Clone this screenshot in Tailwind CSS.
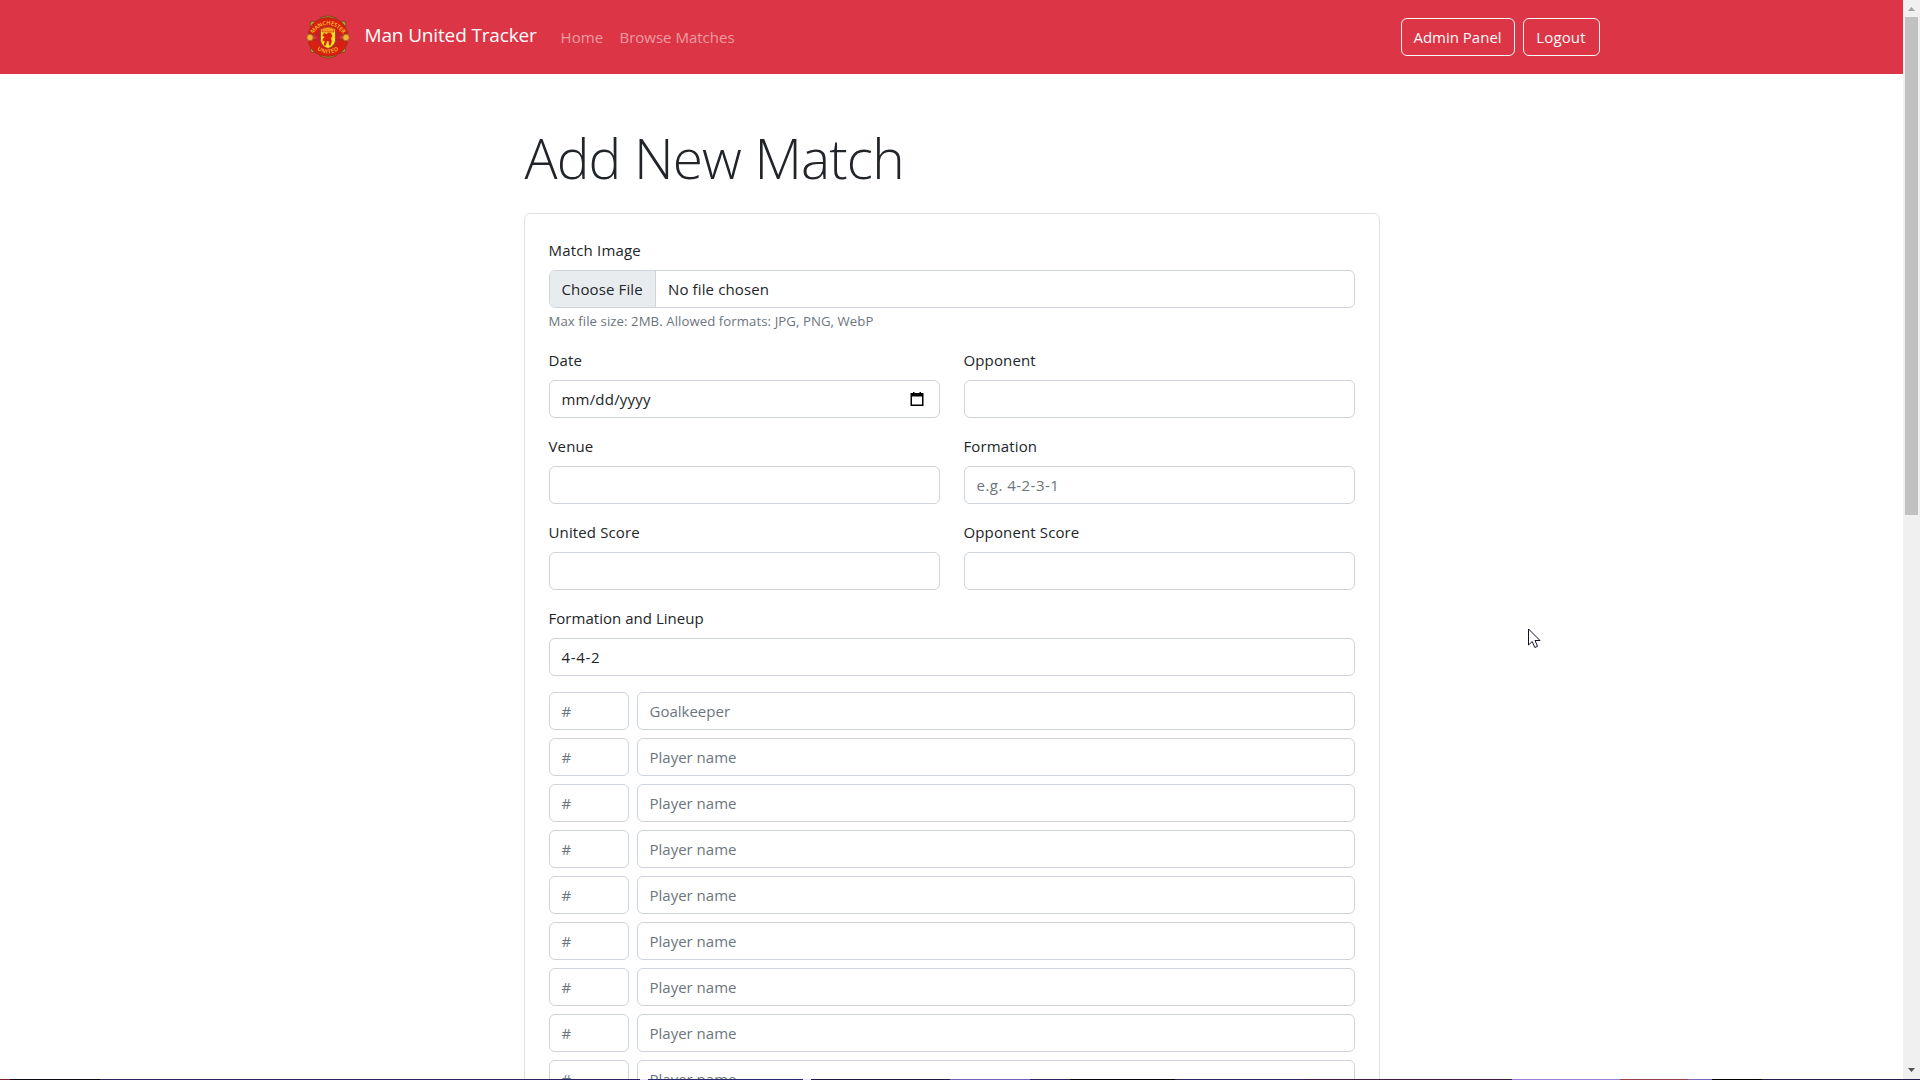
<!DOCTYPE html>
<html lang="en">
<head>
<meta charset="utf-8">
<title>Man United Tracker</title>
<script src="https://cdn.jsdelivr.net/npm/@tailwindcss/browser@4"></script>
</head>
<body class="h-[1080px] overflow-hidden bg-white font-['Open_Sans','Noto_Sans',sans-serif] text-[15px] leading-6 tracking-[0.13px] text-[#212529]">
<div class="flex h-[1079px] overflow-hidden">
  <div class="min-w-0 flex-1">
    <nav class="flex h-[74px] justify-center bg-[#dc3545]">
      <div class="flex w-[1296px] items-center">
        <svg class="ml-[2.500px] h-[44px] w-[44px] shrink-0" viewBox="0 0 44 44">
          <defs>
            <path id="top" d="M6 20Q22 -.5 38 20"/>
            <path id="bottom" d="M6 29.500Q22 48 38 29.500"/>
          </defs>
          <g fill="#b99a2f" stroke="#74401f" stroke-width=".8">
            <circle cx="7" cy="9" r="3"/><circle cx="37" cy="9" r="3"/>
            <circle cx="7" cy="35" r="2.6"/><circle cx="37" cy="35" r="2.6"/>
            <path d="M14 3q8-4 16 0v3H14zM14 41q8 4 16 0v-3H14z"/>
          </g>
          <path d="M2 18Q7 2.500 22 2.500T42 18L34 21Q31 11.500 22 11.500T10 21ZM2 27Q7 41.500 22 41.500T42 27L34 24Q31 33.500 22 33.500T10 24Z" fill="#da1e10" stroke="#8a3a1c" stroke-width=".8"/>
          <circle cx="22" cy="22.500" r="11.800" fill="#c8202c"/>
          <path d="M14.500 14q7.500-4 15 0v11.500q-1 6-7.500 8-6.500-2-7.500-8z" fill="#fbe122" stroke="#9b3a14" stroke-width=".8"/>
          <path d="M16 13.500q6-3 12 0v3.500H16z" fill="#f19a1f" stroke="#da1e10" stroke-width=".6"/>
          <path d="M18 18l2.500 1 2-1.500 2.500 .5 1.500 3-1.500 2 .8 3.500-1.300 4h-1.500l-.3-4-1.500-.5-1.500 4.500h-2l1-5-2 1v-2.500l2-2-2.500-1z" fill="#da1e10"/>
          <circle cx="4" cy="22.500" r="3.200" fill="#f6b33c" stroke="#a5651c" stroke-width=".8"/>
          <circle cx="40" cy="22.500" r="3.200" fill="#f6b33c" stroke="#a5651c" stroke-width=".8"/>
          <g fill="#fbc92a" font-family="Open Sans" font-weight="600" font-size="5.600" text-anchor="middle">
            <text letter-spacing="-.05"><textPath href="#top" startOffset="50%">MANCHESTER</textPath></text>
            <text letter-spacing=".6"><textPath href="#bottom" startOffset="50%">UNITED</textPath></text>
          </g>
        </svg>
        <a class="-mt-1 ml-[14.500px] w-[196px] whitespace-nowrap text-[19px] leading-[30px] tracking-[-0.15px] text-white">Man United Tracker</a>
        <a class="w-[59px] whitespace-nowrap text-white/50">Home</a>
        <a class="whitespace-nowrap tracking-normal text-white/50">Browse Matches</a>
        <div class="ml-auto flex gap-2">
          <a class="flex h-[38px] w-[114px] items-center justify-center rounded-md border border-[#f8f9fa] tracking-normal text-[#f8f9fa]">Admin Panel</a>
          <a class="flex h-[38px] w-[77px] items-center justify-center rounded-md border border-[#f8f9fa] text-[#f8f9fa]">Logout</a>
        </div>
      </div>
    </nav>
    <main class="mx-auto w-[856px] pt-12">
      <h1 class="mb-6 h-[67px] whitespace-nowrap pl-px text-[55px] font-light leading-[72px] tracking-[-0.85px]">Add New Match</h1>
      <form class="h-[1400px] rounded-md border border-[#dee2e6] p-6">
        <div class="mb-2 tracking-[0.18px]">Match Image</div>
        <div class="flex h-[38px] overflow-hidden rounded-md border border-[#ced4da]">
          <div class="w-[106px] border-r border-[#ced4da] bg-[#e9ecef] pl-3 pt-1.5">Choose File</div>
          <div class="pl-[12.500px] pt-1.5">No file chosen</div>
        </div>
        <div class="mb-4 mt-[3px] h-[21px] text-[13.200px] leading-[21px] tracking-[0.07px] text-[#6c757d]">Max file size: 2MB. Allowed formats: JPG, PNG, WebP</div>
        <div class="grid grid-cols-2 gap-x-6 gap-y-4">
          <div>
            <div class="mb-2">Date</div>
            <div class="flex h-[38px] items-center justify-between rounded-md border border-[#ced4da] pl-3 pr-[15px]">
              <span class="tracking-[0.2px]">mm/dd/yyyy</span>
              <svg class="h-4 w-[14px]" viewBox="0 0 14 16"><path d="M3 1h1.500v1h5V1H11v1h2.500v13H.5V2H3zM2 5.500V13.500h10V5.500z" fill="#000" fill-rule="evenodd"/></svg>
            </div>
          </div>
          <div>
            <div class="mb-2">Opponent</div>
            <div class="h-[38px] rounded-md border border-[#ced4da]"></div>
          </div>
          <div>
            <div class="mb-2">Venue</div>
            <div class="h-[38px] rounded-md border border-[#ced4da]"></div>
          </div>
          <div>
            <div class="mb-2">Formation</div>
            <div class="h-[38px] rounded-md border border-[#ced4da] px-3 py-1.5 tracking-[0.47px] text-[#6c757d]">e.g. 4-2-3-1</div>
          </div>
          <div>
            <div class="mb-2">United Score</div>
            <div class="h-[38px] rounded-md border border-[#ced4da]"></div>
          </div>
          <div>
            <div class="mb-2">Opponent Score</div>
            <div class="h-[38px] rounded-md border border-[#ced4da]"></div>
          </div>
        </div>
        <div class="mb-2 mt-4 tracking-[0.03px]">Formation and Lineup</div>
        <div class="mb-4 h-[38px] rounded-md border border-[#ced4da] px-3 py-1.5 tracking-[0.7px]">4-4-2</div>
        <div class="grid grid-cols-[80px_1fr] gap-2 tracking-normal text-[#6c757d] *:h-[38px] *:rounded-md *:border *:border-[#ced4da] *:px-3 *:py-1.5">
          <div>#</div><div>Goalkeeper</div>
          <div>#</div><div>Player name</div>
          <div>#</div><div>Player name</div>
          <div>#</div><div>Player name</div>
          <div>#</div><div>Player name</div>
          <div>#</div><div>Player name</div>
          <div>#</div><div>Player name</div>
          <div>#</div><div>Player name</div>
          <div>#</div><div>Player name</div>
        </div>
      </form>
    </main>
  </div>
  <div class="flex w-[17px] shrink-0 flex-col items-center bg-[#f0f0f0]">
    <svg class="h-[17px] w-[17px] shrink-0" viewBox="0 0 17 17"><path d="M5 11l3.500-4 3.500 4z" fill="#a3a3a3"/></svg>
    <div class="h-[498px] w-[13px] bg-[#c1c1c1]"></div>
    <svg class="mt-auto h-[17px] w-[17px] shrink-0" viewBox="0 0 17 17"><path d="M5 6l3.500 4 3.500-4z" fill="#505050"/></svg>
  </div>
</div>
<!-- desktop edge showing under the window -->
<div class="flex h-px">
  <div class="w-[10px] bg-[#7a2030]"></div><div class="w-[90px] bg-[#0c0810]"></div><div class="w-[540px] bg-[#2a2560]"></div><div class="w-[8px] bg-[#e8e4ff]"></div><div class="w-[155px] bg-[#2c2870]"></div><div class="w-[8px] bg-[#e8e4ff]"></div><div class="w-[139px] bg-[#1e1a48]"></div><div class="w-[80px] bg-[#6e62c0]"></div><div class="w-[40px] bg-[#2a2560]"></div><div class="w-[105px] bg-[#08060c]"></div><div class="w-[130px] bg-[#2c2868]"></div><div class="w-[207px] bg-[#3c1c40]"></div><div class="w-[108px] bg-[#9a80dc]"></div><div class="w-[68px] bg-[#98404c]"></div><div class="w-[24px] bg-[#7a66c0]"></div><div class="w-[50px] bg-black"></div><div class="flex-1 bg-[#221e50]"></div>
</div>
<svg class="absolute left-[1528px] top-[628px] h-[21px] w-[14px]" viewBox="0 0 14 21"><path d="M.5 1v16l3.700-3.500 2.600 6 2.700-1.200-2.500-5.800H12z" fill="#fff" stroke="#14102a"/></svg>
</body>
</html>
